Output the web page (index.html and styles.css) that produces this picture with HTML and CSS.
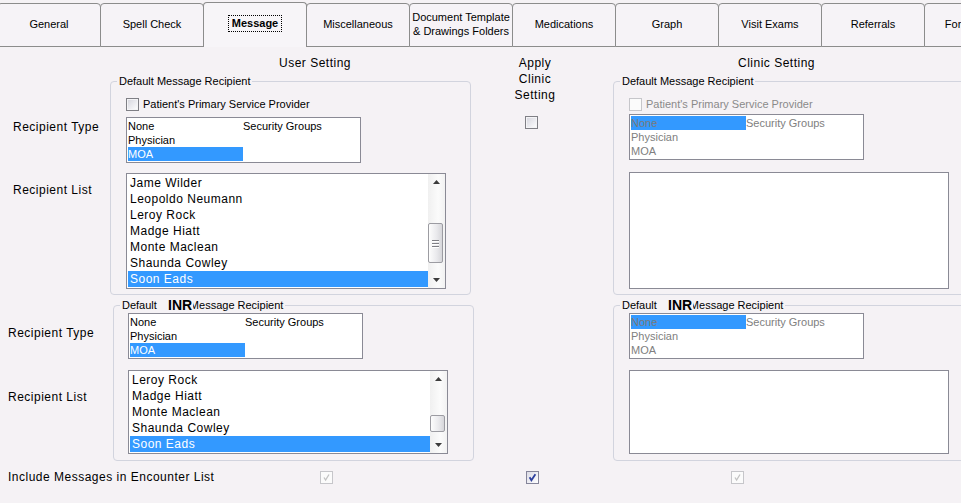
FILE: index.html
```html
<!DOCTYPE html>
<html>
<head>
<meta charset="utf-8">
<title>Message Settings</title>
<link rel="stylesheet" href="styles.css">
</head>
<body>
<div class="window">
  <div class="tabs">
    <div class="tab">General</div>
    <div class="tab">Spell Check</div>
    <div class="tab active"><span class="focus">Message</span></div>
    <div class="tab">Miscellaneous</div>
    <div class="tab">Document Template<br>&amp; Drawings Folders</div>
    <div class="tab">Medications</div>
    <div class="tab">Graph</div>
    <div class="tab">Visit Exams</div>
    <div class="tab">Referrals</div>
    <div class="tab">Form Letters</div>
  </div>

  <div class="form">
    <div class="head head-user">User Setting</div>
    <div class="apply">
      <div class="apply-text">Apply<br>Clinic<br>Setting</div>
      <span class="cb cb-apply"></span>
    </div>
    <div class="head head-clinic">Clinic Setting</div>

    <div class="labels labels-1">
      <div class="lbl">Recipient Type</div>
      <div class="lbl lbl-list1">Recipient List</div>
    </div>

    <fieldset class="group group-user1">
      <legend class="legend">Default Message Recipient</legend>
      <div class="group-body pad-15">
        <div class="chk-row"><span class="cb"></span><span>Patient's Primary Service Provider</span></div>
        <div class="lb lb-type mt-6">
          <div class="cell">None</div><div class="cell">Security Groups</div>
          <div class="cell">Physician</div><div class="cell"></div>
          <div class="cell sel">MOA</div><div class="cell"></div>
        </div>
        <div class="lb lb-list lb-list-big mt-10">
          <div class="items">
            <div class="item">Jame Wilder</div>
            <div class="item">Leopoldo Neumann</div>
            <div class="item">Leroy Rock</div>
            <div class="item">Madge Hiatt</div>
            <div class="item">Monte Maclean</div>
            <div class="item">Shaunda Cowley</div>
            <div class="item sel">Soon Eads</div>
          </div>
          <div class="sb">
            <div class="arr"><svg width="7" height="4" viewBox="0 0 7 4"><path d="M0 4 L3.5 0 L7 4Z" fill="#3c3c3c"/></svg></div>
            <div class="thumb thumb-big"><span class="grip"></span><span class="grip"></span><span class="grip"></span></div>
            <div class="arr arr-down"><svg width="7" height="4" viewBox="0 0 7 4"><path d="M0 0 L3.5 4 L7 0Z" fill="#3c3c3c"/></svg></div>
          </div>
        </div>
      </div>
    </fieldset>

    <fieldset class="group group-clinic1">
      <legend class="legend">Default Message Recipient</legend>
      <div class="group-body pad-15">
        <div class="chk-row disabled"><span class="cb cb-off"></span><span>Patient's Primary Service Provider</span></div>
        <div class="lb lb-type disabled mt-3">
          <div class="cell sel">None</div><div class="cell">Security Groups</div>
          <div class="cell">Physician</div><div class="cell"></div>
          <div class="cell">MOA</div><div class="cell"></div>
        </div>
        <div class="lb lb-empty lb-empty-big mt-12"></div>
      </div>
    </fieldset>

    <div class="labels labels-2">
      <div class="lbl">Recipient Type</div>
      <div class="lbl lbl-list2">Recipient List</div>
    </div>

    <fieldset class="group group-user2">
      <legend class="legend legend-inr">Default<span class="legend-gap"></span>Message Recipient<span class="inr">INR</span></legend>
      <div class="group-body pad-14">
        <div class="lb lb-type mt-1">
          <div class="cell">None</div><div class="cell">Security Groups</div>
          <div class="cell">Physician</div><div class="cell"></div>
          <div class="cell sel">MOA</div><div class="cell"></div>
        </div>
        <div class="lb lb-list lb-list-small mt-11">
          <div class="items">
            <div class="item">Leroy Rock</div>
            <div class="item">Madge Hiatt</div>
            <div class="item">Monte Maclean</div>
            <div class="item">Shaunda Cowley</div>
            <div class="item sel">Soon Eads</div>
          </div>
          <div class="sb">
            <div class="arr"><svg width="7" height="4" viewBox="0 0 7 4"><path d="M0 4 L3.5 0 L7 4Z" fill="#3c3c3c"/></svg></div>
            <div class="thumb thumb-small"></div>
            <div class="arr arr-down"><svg width="7" height="4" viewBox="0 0 7 4"><path d="M0 0 L3.5 4 L7 0Z" fill="#3c3c3c"/></svg></div>
          </div>
        </div>
      </div>
    </fieldset>

    <fieldset class="group group-clinic2">
      <legend class="legend legend-inr">Default<span class="legend-gap"></span>Message Recipient<span class="inr">INR</span></legend>
      <div class="group-body pad-15">
        <div class="lb lb-type disabled mt-1">
          <div class="cell sel">None</div><div class="cell">Security Groups</div>
          <div class="cell">Physician</div><div class="cell"></div>
          <div class="cell">MOA</div><div class="cell"></div>
        </div>
        <div class="lb lb-empty lb-empty-small mt-11"></div>
      </div>
    </fieldset>

    <div class="bottom">
      <div class="bottom-label">Include Messages in Encounter List</div>
      <span class="cb cb-off cb-check"><svg width="11" height="11" viewBox="0 0 11 11"><path d="M3 5.5 L4.6 8 L8 2.5" fill="none" stroke="#c2c2c2" stroke-width="1.3"/></svg></span>
      <span class="cb cb-on cb-check cb-mid"><svg width="11" height="11" viewBox="0 0 11 11"><path d="M2.6 5.2 L4.4 8.2 L8.4 2.2" fill="none" stroke="#2c3f9e" stroke-width="1.8"/></svg></span>
      <span class="cb cb-off cb-check cb-last"><svg width="11" height="11" viewBox="0 0 11 11"><path d="M3 5.5 L4.6 8 L8 2.5" fill="none" stroke="#c2c2c2" stroke-width="1.3"/></svg></span>
    </div>
  </div>
</div>
</body>
</html>
```

FILE: styles.css
```css
* { box-sizing: border-box; }

html, body {
  margin: 0;
  padding: 0;
  width: 961px;
  height: 503px;
  overflow: hidden;
  background: #f5f2f5;
}

body {
  font-family: "Liberation Sans", Arial, sans-serif;
  font-size: 11px;
  color: #000;
}

.window {
  width: 961px;
  height: 503px;
  overflow: hidden;
}

/* ---------- tabs ---------- */
.tabs {
  display: flex;
  height: 47px;
  margin-left: -3px;
  width: 1100px;
}

.tab {
  flex: 0 0 104px;
  margin-right: -1px;
  margin-top: 3px;
  height: 44px;
  border: 1px solid #8c8c8c;
  border-radius: 4px 4px 0 0;
  background: #f6f3f7;
  display: flex;
  align-items: center;
  justify-content: center;
  text-align: center;
  font-size: 11px;
  line-height: 14px;
  padding-bottom: 2px;
  white-space: nowrap;
}

.tab.active {
  margin-top: 2px;
  height: 45px;
  border-bottom: none;
  position: relative;
  z-index: 1;
  background: #f7f5f8;
  font-weight: bold;
  padding-bottom: 3px;
}

.focus {
  border: 1px dotted #000;
  padding: 1px 3px;
  line-height: 13px;
}

/* ---------- form grid ---------- */
.form {
  display: grid;
  grid-template-columns: 110px 360px 143px 360px;
  grid-template-rows: 28px auto auto auto;
  width: 973px;
}

.head, .lbl, .apply-text, .bottom-label, .item {
  font-size: 12px;
  letter-spacing: 0.5px;
  line-height: 16px;
}

.head { padding-top: 8px; }
.head-user { grid-column: 2; grid-row: 1; padding-left: 169px; }
.head-clinic { grid-column: 4; grid-row: 1; padding-left: 125px; }

.apply {
  grid-column: 3;
  grid-row: 1 / span 2;
  padding-top: 8px;
}

.apply-text {
  width: 130px;
  text-align: center;
}

.cb-apply {
  display: block;
  margin-top: 13px;
  margin-left: 55px;
}

.labels-1 { grid-column: 1; grid-row: 2; padding: 44px 0 0 13px; }
.labels-2 { grid-column: 1; grid-row: 3; padding: 30px 0 0 8px; }
.lbl { white-space: nowrap; }
.lbl-list1 { margin-top: 47px; }
.lbl-list2 { margin-top: 48px; }

/* ---------- group boxes ---------- */
.group {
  margin: 0;
  padding: 0;
  width: 361px;
  border: 1px solid #d2d4de;
  border-radius: 4px;
  min-width: 0;
}

.group-user1 { grid-column: 2; grid-row: 2; }
.group-clinic1 { grid-column: 4; grid-row: 2; }
.group-user2 { grid-column: 2; grid-row: 3; margin-top: 4px; margin-left: 3px; }
.group-clinic2 { grid-column: 4; grid-row: 3; margin-top: 4px; }

.legend {
  margin-left: 6px;
  padding: 0 2px;
  font-size: 11px;
  line-height: 13px;
  white-space: nowrap;
}

.legend-inr { position: relative; }
.legend-gap { display: inline-block; width: 33px; }

.inr {
  position: absolute;
  left: 48px;
  top: -1px;
  font-size: 14px;
  font-weight: bold;
  line-height: 15px;
  background: #f5f2f5;
  padding-right: 1px;
}

.pad-15 { padding: 0 0 5px 15px; }
.pad-14 { padding: 0 0 6px 14px; }
.group-user2 .group-body, .group-clinic2 .group-body { padding-bottom: 6px; }

.mt-1 { margin-top: 1px; }
.mt-3 { margin-top: 3px; }
.mt-6 { margin-top: 6px; }
.mt-10 { margin-top: 10px; }
.mt-11 { margin-top: 11px; }
.mt-12 { margin-top: 12px; }

/* ---------- checkboxes ---------- */
.chk-row {
  display: flex;
  align-items: center;
  gap: 4px;
  height: 13px;
  margin-top: 10px;
  font-size: 11px;
  line-height: 13px;
  white-space: nowrap;
}

.chk-row.disabled { color: #8a8a8a; }

.cb {
  display: inline-block;
  flex: 0 0 13px;
  width: 13px;
  height: 13px;
  border: 1px solid #7f7f85;
  background: linear-gradient(135deg, #d4d4dc 0%, #eeeef2 60%, #ffffff 100%);
  box-shadow: inset 0 0 0 1px #f4f4f6;
}

.cb-off {
  border-color: #c6c6ca;
  background: #fbfbfb;
  box-shadow: none;
}

.cb-on {
  border-color: #85859a;
  background: linear-gradient(135deg, #dcdce6 0%, #f3f3f7 70%, #ffffff 100%);
  box-shadow: none;
}

.cb-check { position: relative; }
.cb-check svg { display: block; }

/* ---------- list boxes ---------- */
.lb {
  border: 1px solid #8a8a95;
  background: #fff;
}

.lb-type {
  width: 235px;
  height: 46px;
  padding: 1px;
  display: grid;
  grid-template-columns: 115px 1fr;
  grid-auto-rows: 14px;
  font-size: 11px;
  line-height: 14px;
}

.lb-type.disabled { color: #808080; }

.cell { white-space: nowrap; }

.sel {
  background: #3399ff;
  color: #fff;
}

.lb-type.disabled .sel { color: #7a7a7a; }

.lb-list {
  width: 320px;
  display: flex;
  padding: 1px 0 1px 1px;
}

.lb-list-big { height: 116px; }
.lb-list-small { height: 84px; }

.items {
  flex: 1;
  overflow: hidden;
}

.item {
  height: 16px;
  padding-left: 2px;
  white-space: nowrap;
}

.sb {
  width: 17px;
  display: flex;
  flex-direction: column;
  background: linear-gradient(90deg, #f0f0f0, #fbfbfb 60%, #f2f2f2);
  margin-top: -1px;
  margin-bottom: -1px;
}

.arr {
  height: 16px;
  display: flex;
  align-items: center;
  justify-content: center;
  flex: 0 0 16px;
}

.arr-down { margin-top: auto; }

.thumb {
  width: 15px;
  border: 1px solid #9c9ca2;
  border-radius: 2px;
  background: linear-gradient(90deg, #fdfdfd, #e9e9ec 60%, #d6d6da);
  display: flex;
  flex-direction: column;
  align-items: center;
  justify-content: center;
  gap: 2px;
}

.thumb-big { height: 40px; margin-top: 33px; }
.thumb-small { height: 17px; margin-top: 28px; }

.grip {
  width: 7px;
  height: 1px;
  background: #7f7f85;
  box-shadow: 0 1px 0 #ffffff;
}

.lb-empty { width: 320px; }
.lb-empty-big { height: 117px; }
.lb-empty-small { height: 84px; }

/* ---------- bottom row ---------- */
.bottom {
  grid-column: 1 / -1;
  grid-row: 4;
  display: flex;
  align-items: center;
  padding: 8px 0 0 8px;
}

.bottom-label {
  flex: 0 0 312px;
  white-space: nowrap;
}

.cb-mid { margin-left: 193px; }
.cb-last { margin-left: 192px; }
```
